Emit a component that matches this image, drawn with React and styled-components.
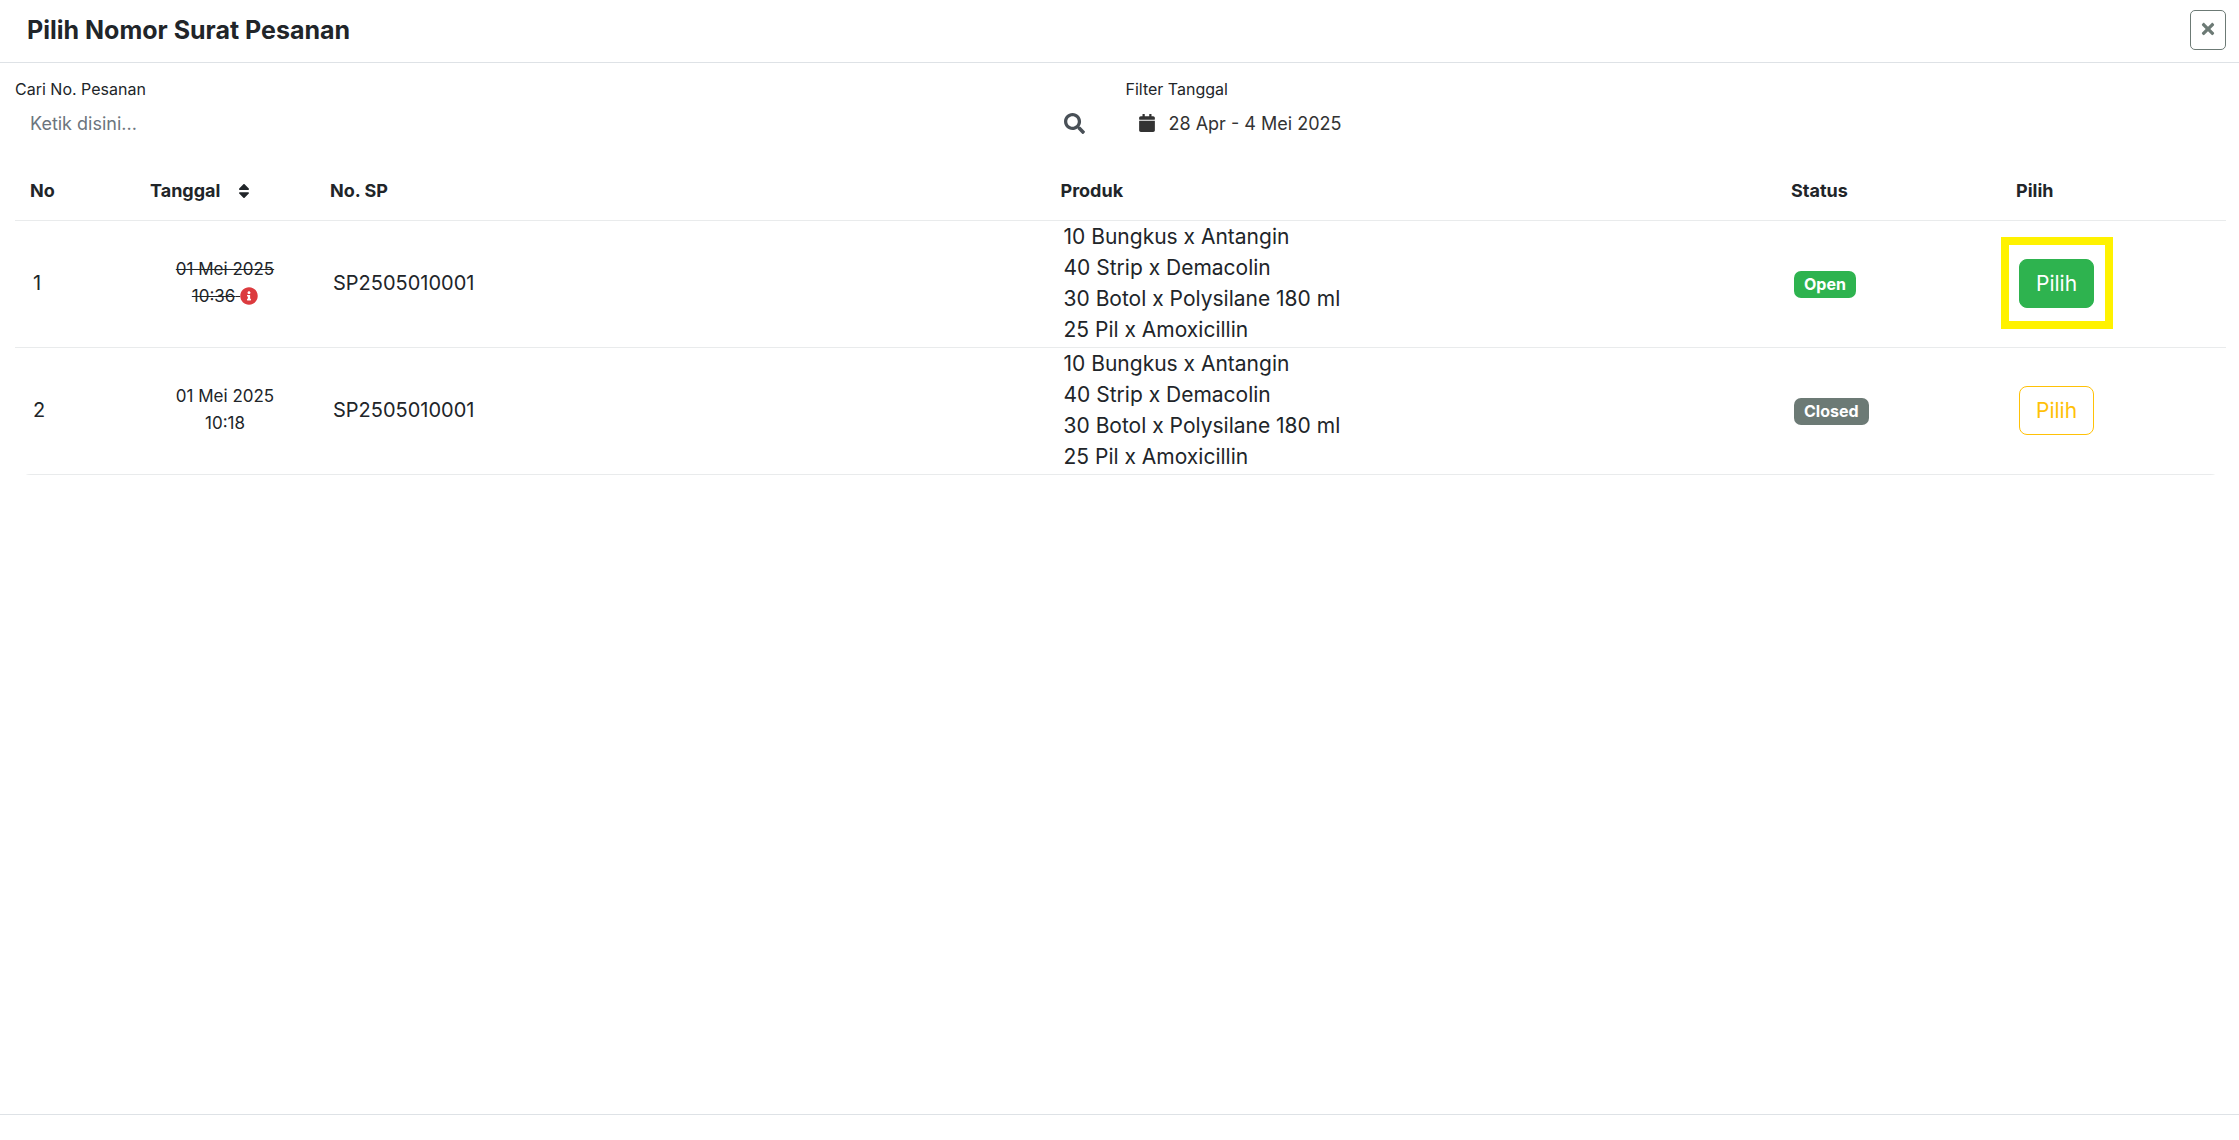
import { useState } from "react";
import styled, { createGlobalStyle } from "styled-components";
import {
  FaCalendar,
  FaInfoCircle,
  FaSearch,
  FaSort,
  FaTimes,
} from "react-icons/fa";

const GlobalStyle = createGlobalStyle`
  * {
    box-sizing: border-box;
  }

  body {
    margin: 0;
    background: #fff;
    color: #212529;
    font-family: Inter, "Noto Sans", sans-serif;
    font-size: 20px;
    line-height: 31px;
  }

  button,
  input {
    font: inherit;
  }
`;

const Modal = styled.div`
  display: flex;
  flex-direction: column;
  min-height: 100vh;
`;

const Header = styled.header`
  display: flex;
  justify-content: space-between;
  align-items: center;
  padding: 10px 13px 12px 27px;
  border-bottom: 1px solid #dee2e6;
`;

const Title = styled.h1`
  margin: 0;
  font-size: 25px;
  font-weight: 700;
  line-height: 36px;
`;

const CloseButton = styled.button`
  display: flex;
  justify-content: center;
  align-items: center;
  width: 36px;
  height: 40px;
  padding: 0 0 2px;
  border: 1px solid #6c7a75;
  border-radius: 5px;
  background: transparent;
  color: #6c7a75;
  font-size: 18px;
  cursor: pointer;
`;

const Body = styled.main`
  flex: 1;
  padding: 14px 13px 0 15px;
`;

const Filters = styled.div`
  display: grid;
  grid-template-columns: 1fr 1fr;
  gap: 12px;
  padding-right: 2px;
`;

const Label = styled.label`
  display: block;
  font-size: 16px;
  line-height: 24px;
`;

const Control = styled.div`
  display: flex;
  align-items: center;
  gap: 13px;
  height: 44px;
  padding: ${({ $wide }) => ($wide ? "0 29px 0 15px" : "0 12px")};
  color: ${({ $wide }) => ($wide ? "#495057" : "#333")};
  font-size: 18px;

  svg {
    flex: none;
  }
`;

const TextInput = styled.input`
  flex: 1;
  min-width: 0;
  padding: 0;
  border: 0;
  outline: 0;
  background: transparent;
  color: inherit;

  &::placeholder {
    color: #6c757d;
    opacity: 1;
  }
`;

const TableWrapper = styled.div`
  margin-top: 16px;
  border-radius: 16px;
  overflow: hidden;
`;

const Table = styled.table`
  width: 100%;
  table-layout: fixed;
  border-collapse: separate;
  border-spacing: 0;
`;

const Th = styled.th`
  width: ${({ $width }) => $width || "auto"};
  height: 60px;
  padding: 0 15px;
  border-bottom: 1px solid #e9ebec;
  font-size: 18px;
  font-weight: 700;
  text-align: left;
`;

const SortButton = styled.button`
  display: inline-flex;
  align-items: center;
  gap: 15px;
  padding: 0;
  border: 0;
  background: transparent;
  color: inherit;
  cursor: pointer;
`;

const Td = styled.td`
  padding: 0 18px 2px;
  border-bottom: 1px solid #e9ebec;
`;

const DateCell = styled(Td)`
  font-size: 17px;
  line-height: 27px;
  text-align: center;

  svg {
    color: #dc3b3f;
    font-size: 18px;
    vertical-align: -3px;
  }
`;

const DateText = styled.span`
  white-space: pre-wrap;
  text-decoration: ${({ $expired }) => ($expired ? "line-through" : "none")};
`;

const Products = styled.ul`
  margin: 0;
  padding: 0;
  font-size: 21px;
  list-style: none;
`;

const Badge = styled.span`
  display: inline-block;
  padding: 0 10px;
  border-radius: 7px;
  background: ${({ $open }) => ($open ? "#2eb34f" : "#6c7a75")};
  color: #fff;
  font-size: 16px;
  font-weight: 700;
  line-height: 27px;
  vertical-align: middle;
`;

const PickWrapper = styled.div`
  position: relative;
  width: fit-content;
`;

const PickButton = styled.button`
  display: block;
  height: 49px;
  padding: 0 16px;
  border: 1px solid ${({ $open }) => ($open ? "#2eb34f" : "#ffc107")};
  border-radius: 8px;
  background: ${({ $open }) => ($open ? "#2eb34f" : "transparent")};
  color: ${({ $open }) => ($open ? "#fff" : "#ffc107")};
  font-size: 21px;
  cursor: pointer;
`;

const Highlight = styled.div`
  position: absolute;
  inset: -22px -19px -21px -18px;
  border: 8px solid #fff200;
  pointer-events: none;
`;

const Footer = styled.footer`
  height: 26px;
  border-top: 1px solid #dee2e6;
`;

const products = [
  "10 Bungkus x Antangin",
  "40 Strip x Demacolin",
  "30 Botol x Polysilane 180 ml",
  "25 Pil x Amoxicillin",
];

const orders = [
  {
    date: "01 Mei 2025",
    time: "10:36",
    number: "SP2505010001",
    status: "Open",
    expired: true,
  },
  {
    date: "01 Mei 2025",
    time: "10:18",
    number: "SP2505010001",
    status: "Closed",
    expired: false,
  },
];

const OrderRow = ({ order, no }) => {
  const isOpen = order.status === "Open";

  return (
    <tr>
      <Td>{no}</Td>
      <DateCell>
        <DateText $expired={order.expired}>
          {order.date}
          <br />
          {order.time}
          {order.expired && " "}
        </DateText>
        {order.expired && <FaInfoCircle />}
      </DateCell>
      <Td>{order.number}</Td>
      <Td>
        <Products>
          {products.map((product) => (
            <li key={product}>{product}</li>
          ))}
        </Products>
      </Td>
      <Td>
        <Badge $open={isOpen}>{order.status}</Badge>
      </Td>
      <Td>
        <PickWrapper>
          <PickButton type="button" $open={isOpen}>
            Pilih
          </PickButton>
          {isOpen && <Highlight />}
        </PickWrapper>
      </Td>
    </tr>
  );
};

const App = () => {
  const [search, setSearch] = useState("");
  const [period, setPeriod] = useState("28 Apr - 4 Mei 2025");

  return (
    <>
      <GlobalStyle />
      <Modal>
        <Header>
          <Title>Pilih Nomor Surat Pesanan</Title>
          <CloseButton type="button" aria-label="Tutup">
            <FaTimes />
          </CloseButton>
        </Header>

        <Body>
          <Filters>
            <div>
              <Label htmlFor="search">Cari No. Pesanan</Label>
              <Control $wide>
                <TextInput
                  id="search"
                  placeholder="Ketik disini..."
                  value={search}
                  onChange={(e) => setSearch(e.target.value)}
                />
                <FaSearch size={21} />
              </Control>
            </div>
            <div>
              <Label htmlFor="period">Filter Tanggal</Label>
              <Control>
                <FaCalendar size={18} />
                <TextInput
                  id="period"
                  value={period}
                  onChange={(e) => setPeriod(e.target.value)}
                />
              </Control>
            </div>
          </Filters>

          <TableWrapper>
            <Table>
              <thead>
                <tr>
                  <Th $width="120px">No</Th>
                  <Th $width="180px">
                    <SortButton type="button">
                      Tanggal
                      <FaSort />
                    </SortButton>
                  </Th>
                  <Th>No. SP</Th>
                  <Th>Produk</Th>
                  <Th $width="225px">Status</Th>
                  <Th $width="225px">Pilih</Th>
                </tr>
              </thead>
              <tbody>
                {orders.map((order, index) => (
                  <OrderRow key={order.time} order={order} no={index + 1} />
                ))}
              </tbody>
            </Table>
          </TableWrapper>
        </Body>

        <Footer />
      </Modal>
    </>
  );
};

export default App;
